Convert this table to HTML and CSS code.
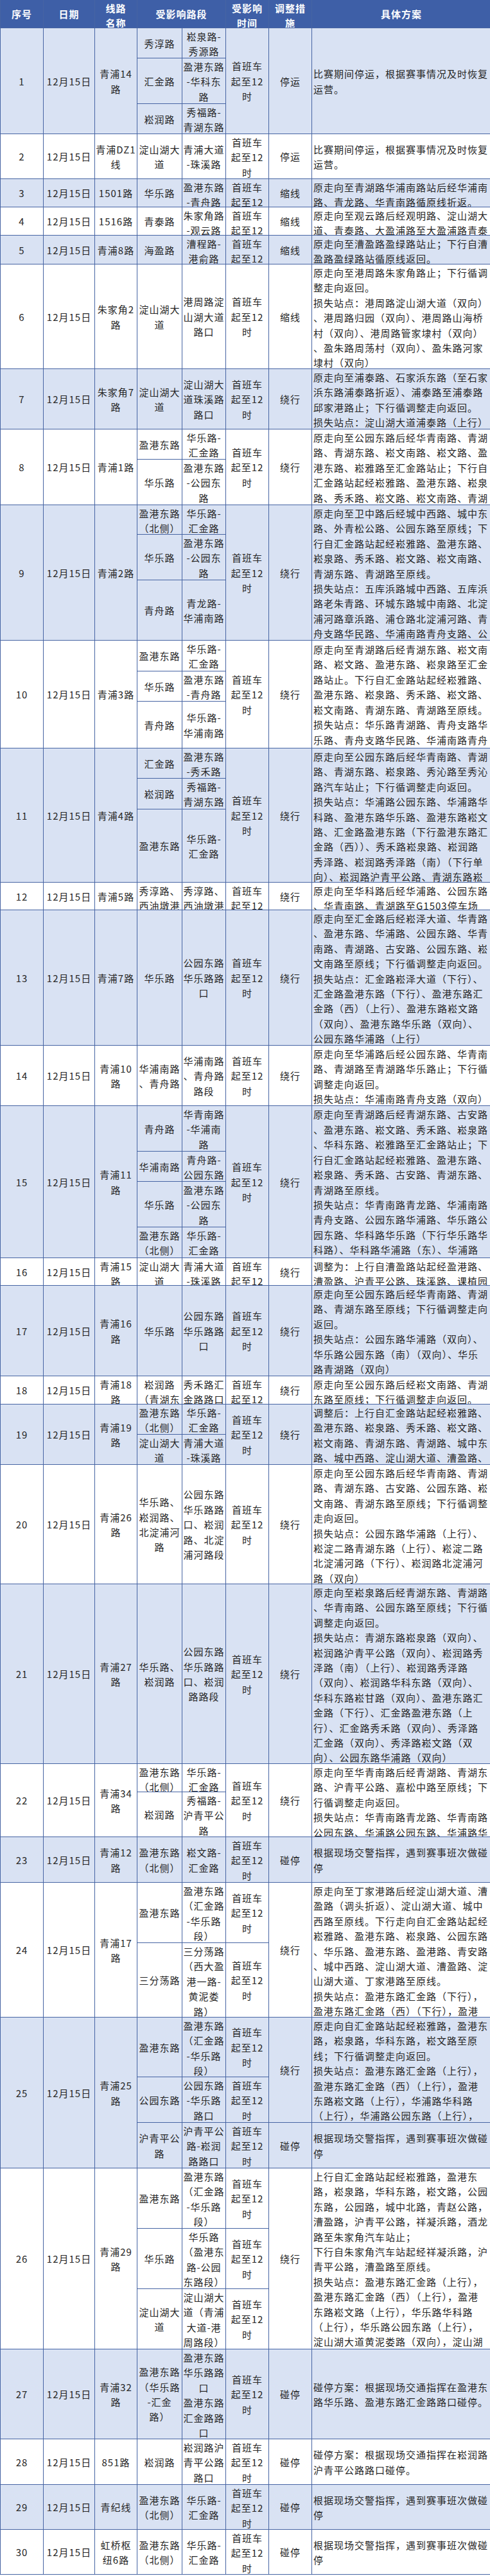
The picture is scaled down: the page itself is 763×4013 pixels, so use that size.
FILE: index.html
```html
<!DOCTYPE html>
<html lang="zh-CN">
<head>
<meta charset="utf-8">
<title>公交线路调整方案</title>
<link rel="stylesheet" href="styles.css">
</head>
<body>
<div class="sheet">

<div class="rec head">
<div class="cell k1"><span>序号</span></div>
<div class="cell k2"><span>日期</span></div>
<div class="cell k3"><span>线路<br>名称</span></div>
<div class="cell k45"><span>受影响路段</span></div>
<div class="cell k6"><span>受影响<br>时间</span></div>
<div class="cell k7"><span>调整措<br>施</span></div>
<div class="cell k8"><span>具体方案</span></div>
</div>

<div class="rec alt r1">
<div class="cell k1"><span>1</span></div>
<div class="cell k2"><span>12月15日</span></div>
<div class="cell k3"><span>青浦14<br>路</span></div>
<div class="cell k4 y1"><span>秀淳路</span></div>
<div class="cell k5 y1"><span>崧泉路-<br>秀源路</span></div>
<div class="cell k4 y2"><span>汇金路</span></div>
<div class="cell k5 y2"><span>盈港东路<br>-华科东<br>路</span></div>
<div class="cell k4 y3"><span>崧润路</span></div>
<div class="cell k5 y3"><span>秀福路-<br>青湖东路</span></div>
<div class="cell k6"><span>首班车<br>起至12<br>时</span></div>
<div class="cell k7"><span>停运</span></div>
<div class="cell k8"><span>比赛期间停运，根据赛事情况及时恢复<br>运营。</span></div>
</div>

<div class="rec r2">
<div class="cell k1"><span>2</span></div>
<div class="cell k2"><span>12月15日</span></div>
<div class="cell k3"><span>青浦DZ1<br>线</span></div>
<div class="cell k4"><span>淀山湖大<br>道</span></div>
<div class="cell k5"><span>青浦大道<br>-珠溪路</span></div>
<div class="cell k6"><span>首班车<br>起至12<br>时</span></div>
<div class="cell k7"><span>停运</span></div>
<div class="cell k8"><span>比赛期间停运，根据赛事情况及时恢复<br>运营。</span></div>
</div>

<div class="rec alt r3">
<div class="cell k1"><span>3</span></div>
<div class="cell k2"><span>12月15日</span></div>
<div class="cell k3"><span>1501路</span></div>
<div class="cell k4"><span>华乐路</span></div>
<div class="cell k5"><span>盈港东路<br>-青舟路</span></div>
<div class="cell k6"><span>首班车<br>起至12<br>时</span></div>
<div class="cell k7"><span>缩线</span></div>
<div class="cell k8"><span>原走向至青湖路华浦南路站后经华浦南<br>路、青龙路、华青南路循原线折返。</span></div>
</div>

<div class="rec r4">
<div class="cell k1"><span>4</span></div>
<div class="cell k2"><span>12月15日</span></div>
<div class="cell k3"><span>1516路</span></div>
<div class="cell k4"><span>青泰路</span></div>
<div class="cell k5"><span>朱家角路<br>-观云路</span></div>
<div class="cell k6"><span>首班车<br>起至12<br>时</span></div>
<div class="cell k7"><span>缩线</span></div>
<div class="cell k8"><span>原走向至观云路后经观明路、淀山湖大<br>道、青泰路、大盈浦路至大盈浦路青泰</span></div>
</div>

<div class="rec alt r5">
<div class="cell k1"><span>5</span></div>
<div class="cell k2"><span>12月15日</span></div>
<div class="cell k3"><span>青浦8路</span></div>
<div class="cell k4"><span>海盈路</span></div>
<div class="cell k5"><span>漕程路-<br>港俞路</span></div>
<div class="cell k6"><span>首班车<br>起至12<br>时</span></div>
<div class="cell k7"><span>缩线</span></div>
<div class="cell k8"><span>原走向至漕盈路盈绿路站止；下行自漕<br>盈路盈绿路站循原线返回。</span></div>
</div>

<div class="rec r6">
<div class="cell k1"><span>6</span></div>
<div class="cell k2"><span>12月15日</span></div>
<div class="cell k3"><span>朱家角2<br>路</span></div>
<div class="cell k4"><span>淀山湖大<br>道</span></div>
<div class="cell k5"><span>港周路淀<br>山湖大道<br>路口</span></div>
<div class="cell k6"><span>首班车<br>起至12<br>时</span></div>
<div class="cell k7"><span>缩线</span></div>
<div class="cell k8"><span>原走向至港周路朱家角路止；下行循调<br>整走向返回。<br>损失站点：港周路淀山湖大道（双向）<br>、港周路归园（双向）、港周路山海桥<br>村（双向）、港周路管家埭村（双向）<br>、盈朱路周荡村（双向）、盈朱路河家<br>埭村（双向）</span></div>
</div>

<div class="rec alt r7">
<div class="cell k1"><span>7</span></div>
<div class="cell k2"><span>12月15日</span></div>
<div class="cell k3"><span>朱家角7<br>路</span></div>
<div class="cell k4"><span>淀山湖大<br>道</span></div>
<div class="cell k5"><span>淀山湖大<br>道珠溪路<br>路口</span></div>
<div class="cell k6"><span>首班车<br>起至12<br>时</span></div>
<div class="cell k7"><span>绕行</span></div>
<div class="cell k8"><span>原走向至浦泰路、石家浜东路（至石家<br>浜东路浦泰路折返）、浦泰路至浦泰路<br>邱家港路止；下行循调整走向返回。<br>损失站点：淀山湖大道浦泰路（上行）</span></div>
</div>

<div class="rec r8">
<div class="cell k1"><span>8</span></div>
<div class="cell k2"><span>12月15日</span></div>
<div class="cell k3"><span>青浦1路</span></div>
<div class="cell k4 y1"><span>盈港东路</span></div>
<div class="cell k5 y1"><span>华乐路-<br>汇金路</span></div>
<div class="cell k4 y2"><span>华乐路</span></div>
<div class="cell k5 y2"><span>盈港东路<br>-公园东<br>路</span></div>
<div class="cell k6"><span>首班车<br>起至12<br>时</span></div>
<div class="cell k7"><span>绕行</span></div>
<div class="cell k8"><span>原走向至公园东路后经华青南路、青湖<br>路、青湖东路、崧文南路、崧文路、盈<br>港东路、崧雅路至汇金路站止；下行自<br>汇金路站起经崧雅路、盈港东路、崧泉<br>路、秀禾路、崧文路、崧文南路、青湖</span></div>
</div>

<div class="rec alt r9">
<div class="cell k1"><span>9</span></div>
<div class="cell k2"><span>12月15日</span></div>
<div class="cell k3"><span>青浦2路</span></div>
<div class="cell k4 y1"><span>盈港东路<br>（北侧）</span></div>
<div class="cell k5 y1"><span>华乐路-<br>汇金路</span></div>
<div class="cell k4 y2"><span>华乐路</span></div>
<div class="cell k5 y2"><span>盈港东路<br>-公园东<br>路</span></div>
<div class="cell k4 y3"><span>青舟路</span></div>
<div class="cell k5 y3"><span>青龙路-<br>华浦南路</span></div>
<div class="cell k6"><span>首班车<br>起至12<br>时</span></div>
<div class="cell k7"><span>绕行</span></div>
<div class="cell k8"><span>原走向至卫中路后经城中西路、城中东<br>路、外青松公路、公园东路至原线；下<br>行自汇金路站起经崧雅路、盈港东路、<br>崧泉路、秀禾路、崧文路、崧文南路、<br>青湖东路、青湖路至原线。<br>损失站点：五库浜路城中西路、五库浜<br>路老朱青路、环城东路城中南路、北淀<br>浦河路章浜路、浦仓路北淀浦河路、青<br>舟支路华民路、华浦南路青舟支路、公</span></div>
</div>

<div class="rec r10">
<div class="cell k1"><span>10</span></div>
<div class="cell k2"><span>12月15日</span></div>
<div class="cell k3"><span>青浦3路</span></div>
<div class="cell k4 y1"><span>盈港东路</span></div>
<div class="cell k5 y1"><span>华乐路-<br>汇金路</span></div>
<div class="cell k4 y2"><span>华乐路</span></div>
<div class="cell k5 y2"><span>盈港东路<br>-青舟路</span></div>
<div class="cell k4 y3"><span>青舟路</span></div>
<div class="cell k5 y3"><span>华乐路-<br>华浦南路</span></div>
<div class="cell k6"><span>首班车<br>起至12<br>时</span></div>
<div class="cell k7"><span>绕行</span></div>
<div class="cell k8"><span>原走向至青湖路后经青湖东路、崧文南<br>路、崧文路、盈港东路、崧泉路至汇金<br>路站止。下行自汇金路站起经崧雅路、<br>盈港东路、崧泉路、秀禾路、崧文路、<br>崧文南路、青湖东路、青湖路至原线。<br>损失站点：华乐路青湖路、青舟支路华<br>乐路、青舟支路华民路、华浦南路青舟</span></div>
</div>

<div class="rec alt r11">
<div class="cell k1"><span>11</span></div>
<div class="cell k2"><span>12月15日</span></div>
<div class="cell k3"><span>青浦4路</span></div>
<div class="cell k4 y1"><span>汇金路</span></div>
<div class="cell k5 y1"><span>盈港东路<br>-秀禾路</span></div>
<div class="cell k4 y2"><span>崧润路</span></div>
<div class="cell k5 y2"><span>秀福路-<br>青湖东路</span></div>
<div class="cell k4 y3"><span>盈港东路</span></div>
<div class="cell k5 y3"><span>华乐路-<br>汇金路</span></div>
<div class="cell k6"><span>首班车<br>起至12<br>时</span></div>
<div class="cell k7"><span>绕行</span></div>
<div class="cell k8"><span>原走向至公园东路后经华青南路、青湖<br>路、青湖东路、崧泉路、秀沁路至秀沁<br>路汽车站止；下行循调整走向返回。<br>损失站点：华浦路公园东路、华浦路华<br>科路、盈港东路华乐路、盈港东路崧文<br>路、汇金路盈港东路（下行盈港东路汇<br>金路（西））、秀禾路崧泉路、崧润路<br>秀泽路、崧润路秀泽路（南）（下行单<br>向）、崧润路沪青平公路、青湖东路崧</span></div>
</div>

<div class="rec r12">
<div class="cell k1"><span>12</span></div>
<div class="cell k2"><span>12月15日</span></div>
<div class="cell k3"><span>青浦5路</span></div>
<div class="cell k4"><span>秀淳路、<br>西油墩港</span></div>
<div class="cell k5"><span>秀淳路、<br>西油墩港</span></div>
<div class="cell k6"><span>首班车<br>起至12<br>时</span></div>
<div class="cell k7"><span>绕行</span></div>
<div class="cell k8"><span>原走向至华科路后经华浦路、公园东路<br>、华青南路、青湖路至G1503停车场</span></div>
</div>

<div class="rec alt r13">
<div class="cell k1"><span>13</span></div>
<div class="cell k2"><span>12月15日</span></div>
<div class="cell k3"><span>青浦7路</span></div>
<div class="cell k4"><span>华乐路</span></div>
<div class="cell k5"><span>公园东路<br>华乐路路<br>口</span></div>
<div class="cell k6"><span>首班车<br>起至12<br>时</span></div>
<div class="cell k7"><span>绕行</span></div>
<div class="cell k8"><span>原走向至汇金路后经崧泽大道、华青路<br>、盈港东路、华浦路、公园东路、华青<br>南路、青湖路、古安路、公园东路、崧<br>文南路至原线；下行循调整走向返回。<br>损失站点：汇金路崧泽大道（下行）、<br>汇金路盈港东路（下行）、盈港东路汇<br>金路（西）（上行）、盈港东路崧文路<br>（双向）、盈港东路华乐路（双向）、<br>公园东路华浦路（上行）</span></div>
</div>

<div class="rec r14">
<div class="cell k1"><span>14</span></div>
<div class="cell k2"><span>12月15日</span></div>
<div class="cell k3"><span>青浦10<br>路</span></div>
<div class="cell k4"><span>华浦南路<br>、青舟路</span></div>
<div class="cell k5"><span>华浦南路<br>、青舟路<br>路段</span></div>
<div class="cell k6"><span>首班车<br>起至12<br>时</span></div>
<div class="cell k7"><span>绕行</span></div>
<div class="cell k8"><span>原走向至华浦路后经公园东路、华青南<br>路、青湖路至青湖路华乐路止；下行循<br>调整走向返回。<br>损失站点：华浦南路青舟支路（双向）</span></div>
</div>

<div class="rec alt r15">
<div class="cell k1"><span>15</span></div>
<div class="cell k2"><span>12月15日</span></div>
<div class="cell k3"><span>青浦11<br>路</span></div>
<div class="cell k4 y1"><span>青舟路</span></div>
<div class="cell k5 y1"><span>华青南路<br>-华浦南<br>路</span></div>
<div class="cell k4 y2"><span>华浦南路</span></div>
<div class="cell k5 y2"><span>青舟路-<br>公园东路</span></div>
<div class="cell k4 y3"><span>华乐路</span></div>
<div class="cell k5 y3"><span>盈港东路<br>-公园东<br>路</span></div>
<div class="cell k4 y4"><span>盈港东路<br>（北侧）</span></div>
<div class="cell k5 y4"><span>华乐路-<br>汇金路</span></div>
<div class="cell k6"><span>首班车<br>起至12<br>时</span></div>
<div class="cell k7"><span>绕行</span></div>
<div class="cell k8"><span>原走向至青湖路后经青湖东路、古安路<br>、盈港东路、崧文路、秀禾路、崧泉路<br>、华科东路、崧雅路至汇金路站止；下<br>行自汇金路站起经崧雅路、盈港东路、<br>崧泉路、秀禾路、古安路、青湖东路、<br>青湖路至原线。<br>损失站点：华青南路青龙路、华浦南路<br>青舟支路、公园东路华浦路、华乐路公<br>园东路、华科路华乐路（下行华乐路华<br>科路）、华科路华浦路（东）、华浦路</span></div>
</div>

<div class="rec r16">
<div class="cell k1"><span>16</span></div>
<div class="cell k2"><span>12月15日</span></div>
<div class="cell k3"><span>青浦15<br>路</span></div>
<div class="cell k4"><span>淀山湖大<br>道</span></div>
<div class="cell k5"><span>青浦大道<br>-珠溪路</span></div>
<div class="cell k6"><span>首班车<br>起至12<br>时</span></div>
<div class="cell k7"><span>绕行</span></div>
<div class="cell k8"><span>调整为：上行自漕盈路站起经盈港路、<br>漕盈路、沪青平公路、珠溪路、课植园</span></div>
</div>

<div class="rec alt r17">
<div class="cell k1"><span>17</span></div>
<div class="cell k2"><span>12月15日</span></div>
<div class="cell k3"><span>青浦16<br>路</span></div>
<div class="cell k4"><span>华乐路</span></div>
<div class="cell k5"><span>公园东路<br>华乐路路<br>口</span></div>
<div class="cell k6"><span>首班车<br>起至12<br>时</span></div>
<div class="cell k7"><span>绕行</span></div>
<div class="cell k8"><span>原走向至公园东路后经华青南路、青湖<br>路、青湖东路至原线；下行循调整走向<br>返回。<br>损失站点：公园东路华浦路（双向）、<br>华乐路公园东路（南）（双向）、华乐<br>路青湖路（双向）</span></div>
</div>

<div class="rec r18">
<div class="cell k1"><span>18</span></div>
<div class="cell k2"><span>12月15日</span></div>
<div class="cell k3"><span>青浦18<br>路</span></div>
<div class="cell k4"><span>崧润路<br>（青湖东</span></div>
<div class="cell k5"><span>秀禾路汇<br>金路路口</span></div>
<div class="cell k6"><span>首班车<br>起至12<br>时</span></div>
<div class="cell k7"><span>绕行</span></div>
<div class="cell k8"><span>原走向至公园东路后经崧文南路、青湖<br>东路至原线；下行循调整走向返回。</span></div>
</div>

<div class="rec alt r19">
<div class="cell k1"><span>19</span></div>
<div class="cell k2"><span>12月15日</span></div>
<div class="cell k3"><span>青浦19<br>路</span></div>
<div class="cell k4 y1"><span>盈港东路<br>（北侧）</span></div>
<div class="cell k5 y1"><span>华乐路-<br>汇金路</span></div>
<div class="cell k4 y2"><span>淀山湖大<br>道</span></div>
<div class="cell k5 y2"><span>青浦大道<br>-珠溪路</span></div>
<div class="cell k6"><span>首班车<br>起至12<br>时</span></div>
<div class="cell k7"><span>绕行</span></div>
<div class="cell k8"><span>调整后：上行自汇金路站起经崧雅路、<br>盈港东路、崧泉路、秀禾路、崧文路、<br>崧文南路、青湖东路、青湖路、城中东<br>路、城中西路、淀山湖大道、漕盈路、</span></div>
</div>

<div class="rec r20">
<div class="cell k1"><span>20</span></div>
<div class="cell k2"><span>12月15日</span></div>
<div class="cell k3"><span>青浦26<br>路</span></div>
<div class="cell k4"><span>华乐路、<br>崧润路、<br>北淀浦河<br>路</span></div>
<div class="cell k5"><span>公园东路<br>华乐路路<br>口、崧润<br>路、北淀<br>浦河路段</span></div>
<div class="cell k6"><span>首班车<br>起至12<br>时</span></div>
<div class="cell k7"><span>绕行</span></div>
<div class="cell k8"><span>原走向至公园东路后经华青南路、青湖<br>路、青湖东路、古安路、公园东路、崧<br>文南路、青湖东路至原线；下行循调整<br>走向返回。<br>损失站点：公园东路华浦路（上行）、<br>崧淀二路青湖东路（上行）、崧淀二路<br>北淀浦河路（下行）、崧润路北淀浦河<br>路（双向）</span></div>
</div>

<div class="rec alt r21">
<div class="cell k1"><span>21</span></div>
<div class="cell k2"><span>12月15日</span></div>
<div class="cell k3"><span>青浦27<br>路</span></div>
<div class="cell k4"><span>华乐路、<br>崧润路</span></div>
<div class="cell k5"><span>公园东路<br>华乐路路<br>口、崧润<br>路路段</span></div>
<div class="cell k6"><span>首班车<br>起至12<br>时</span></div>
<div class="cell k7"><span>绕行</span></div>
<div class="cell k8"><span>原走向至崧泉路后经青湖东路、青湖路<br>、华青南路、公园东路至原线；下行循<br>调整走向返回。<br>损失站点：青湖东路崧泉路（双向）、<br>崧润路沪青平公路（双向）、崧润路秀<br>泽路（南）（上行）、崧润路秀泽路<br>（双向）、崧润路华科东路（双向）、<br>华科东路崧甘路（双向）、盈港东路汇<br>金路（下行）、汇金路盈港东路（上<br>行）、汇金路秀禾路（双向）、秀泽路<br>汇金路（双向）、秀泽路崧文路（双<br>向）、公园东路华浦路（双向）</span></div>
</div>

<div class="rec r22">
<div class="cell k1"><span>22</span></div>
<div class="cell k2"><span>12月15日</span></div>
<div class="cell k3"><span>青浦34<br>路</span></div>
<div class="cell k4 y1"><span>盈港东路<br>（北侧）</span></div>
<div class="cell k5 y1"><span>华乐路-<br>汇金路</span></div>
<div class="cell k4 y2"><span>崧润路</span></div>
<div class="cell k5 y2"><span>秀福路-<br>沪青平公<br>路</span></div>
<div class="cell k6"><span>首班车<br>起至12<br>时</span></div>
<div class="cell k7"><span>绕行</span></div>
<div class="cell k8"><span>原走向至华青南路后经青湖路、青湖东<br>路、沪青平公路、嘉松中路至原线；下<br>行循调整走向返回。<br>损失站点：华青南路青龙路、华青南路<br>公园东路、华浦路公园东路、华浦路华</span></div>
</div>

<div class="rec alt r23">
<div class="cell k1"><span>23</span></div>
<div class="cell k2"><span>12月15日</span></div>
<div class="cell k3"><span>青浦12<br>路</span></div>
<div class="cell k4"><span>盈港东路<br>（北侧）</span></div>
<div class="cell k5"><span>崧文路-<br>汇金路</span></div>
<div class="cell k6"><span>首班车<br>起至12<br>时</span></div>
<div class="cell k7"><span>碰停</span></div>
<div class="cell k8"><span>根据现场交警指挥，遇到赛事班次做碰<br>停</span></div>
</div>

<div class="rec r24">
<div class="cell k1"><span>24</span></div>
<div class="cell k2"><span>12月15日</span></div>
<div class="cell k3"><span>青浦17<br>路</span></div>
<div class="cell k4 y1"><span>盈港东路</span></div>
<div class="cell k5 y1"><span>盈港东路<br>（汇金路<br>-华乐路<br>段）</span></div>
<div class="cell k6 y1"><span>首班车<br>起至12<br>时</span></div>
<div class="cell k4 y2"><span>三分荡路</span></div>
<div class="cell k5 y2"><span>三分荡路<br>（西大盈<br>港一路-<br>黄泥娄<br>路）</span></div>
<div class="cell k6 y2"><span>首班车<br>起至12<br>时</span></div>
<div class="cell k7"><span>绕行</span></div>
<div class="cell k8"><span>原走向至丁家港路后经淀山湖大道、漕<br>盈路（调头折返）、淀山湖大道、城中<br>西路至原线。下行走向自汇金路站起经<br>崧雅路、盈港东路、崧泉路、公园东路<br>、华乐路、盈港东路、盈港路、青安路<br>、城中西路、淀山湖大道、漕盈路、淀<br>山湖大道、丁家港路至原线。<br>损失站点：盈港东路汇金路（下行），<br>盈港东路汇金路（西）（下行），盈港</span></div>
</div>

<div class="rec alt r25">
<div class="cell k1"><span>25</span></div>
<div class="cell k2"><span>12月15日</span></div>
<div class="cell k3"><span>青浦25<br>路</span></div>
<div class="cell k4 y1"><span>盈港东路</span></div>
<div class="cell k5 y1"><span>盈港东路<br>（汇金路<br>-华乐路<br>段）</span></div>
<div class="cell k6 y1"><span>首班车<br>起至12<br>时</span></div>
<div class="cell k4 y2"><span>公园东路</span></div>
<div class="cell k5 y2"><span>公园东路<br>-华乐路<br>路口</span></div>
<div class="cell k6 y2"><span>首班车<br>起至12<br>时</span></div>
<div class="cell k4 y3"><span>沪青平公<br>路</span></div>
<div class="cell k5 y3"><span>沪青平公<br>路-崧润<br>路路口</span></div>
<div class="cell k6 y3"><span>首班车<br>起至12<br>时</span></div>
<div class="cell k7 y12"><span>绕行</span></div>
<div class="cell k7 y3"><span>碰停</span></div>
<div class="cell k8 y12"><span>原走向自汇金路站起经崧雅路，盈港东<br>路，崧泉路，华科东路，崧文路至原<br>线；下行循调整走向返回。<br>损失站点：盈港东路汇金路（上行），<br>盈港东路汇金路（西）（上行），盈港<br>东路崧文路（上行），华浦路华科路<br>（上行），华浦路公园东路（上行），</span></div>
<div class="cell k8 y3"><span>根据现场交警指挥，遇到赛事班次做碰<br>停</span></div>
</div>

<div class="rec r26">
<div class="cell k1"><span>26</span></div>
<div class="cell k2"><span>12月15日</span></div>
<div class="cell k3"><span>青浦29<br>路</span></div>
<div class="cell k4 y1"><span>盈港东路</span></div>
<div class="cell k5 y1"><span>盈港东路<br>（汇金路<br>-华乐路<br>段）</span></div>
<div class="cell k6 y1"><span>首班车<br>起至12<br>时</span></div>
<div class="cell k4 y2"><span>华乐路</span></div>
<div class="cell k5 y2"><span>华乐路<br>（盈港东<br>路-公园<br>东路段）</span></div>
<div class="cell k6 y2"><span>首班车<br>起至12<br>时</span></div>
<div class="cell k4 y3"><span>淀山湖大<br>道</span></div>
<div class="cell k5 y3"><span>淀山湖大<br>道（青浦<br>大道-港<br>周路段）</span></div>
<div class="cell k6 y3"><span>首班车<br>起至12<br>时</span></div>
<div class="cell k7"><span>绕行</span></div>
<div class="cell k8"><span>上行自汇金路站起经崧雅路，盈港东<br>路，崧泉路，华科东路，崧文路，公园<br>东路，公园路，城中北路，青赵公路，<br>漕盈路，沪青平公路，祥凝浜路，酒龙<br>路至朱家角汽车站止；<br>下行自朱家角汽车站起经祥凝浜路，沪<br>青平公路，漕盈路至原线。<br>损失站点：盈港东路汇金路（上行），<br>盈港东路汇金路（西）（上行），盈港<br>东路崧文路（上行），华乐路华科路<br>（上行），华乐路公园东路（上行），<br>淀山湖大道黄泥娄路（双向），淀山湖</span></div>
</div>

<div class="rec alt r27">
<div class="cell k1"><span>27</span></div>
<div class="cell k2"><span>12月15日</span></div>
<div class="cell k3"><span>青浦32<br>路</span></div>
<div class="cell k4"><span>盈港东路<br>（华乐路<br>-汇金<br>路）</span></div>
<div class="cell k5"><span>盈港东路<br>华乐路路<br>口<br>盈港东路<br>汇金路路<br>口</span></div>
<div class="cell k6"><span>首班车<br>起至12<br>时</span></div>
<div class="cell k7"><span>碰停</span></div>
<div class="cell k8"><span>碰停方案：根据现场交通指挥在盈港东<br>路华乐路、盈港东路汇金路路口碰停。</span></div>
</div>

<div class="rec r28">
<div class="cell k1"><span>28</span></div>
<div class="cell k2"><span>12月15日</span></div>
<div class="cell k3"><span>851路</span></div>
<div class="cell k4"><span>崧润路</span></div>
<div class="cell k5"><span>崧润路沪<br>青平公路<br>路口</span></div>
<div class="cell k6"><span>首班车<br>起至12<br>时</span></div>
<div class="cell k7"><span>碰停</span></div>
<div class="cell k8"><span>碰停方案：根据现场交通指挥在崧润路<br>沪青平公路路口碰停。</span></div>
</div>

<div class="rec alt r29">
<div class="cell k1"><span>29</span></div>
<div class="cell k2"><span>12月15日</span></div>
<div class="cell k3"><span>青纪线</span></div>
<div class="cell k4"><span>盈港东路<br>（北侧）</span></div>
<div class="cell k5"><span>华乐路-<br>汇金路</span></div>
<div class="cell k6"><span>首班车<br>起至12<br>时</span></div>
<div class="cell k7"><span>碰停</span></div>
<div class="cell k8"><span>根据现场交警指挥，遇到赛事班次做碰<br>停</span></div>
</div>

<div class="rec r30">
<div class="cell k1"><span>30</span></div>
<div class="cell k2"><span>12月15日</span></div>
<div class="cell k3"><span>虹桥枢<br>纽6路</span></div>
<div class="cell k4"><span>盈港东路<br>（北侧）</span></div>
<div class="cell k5"><span>华乐路-<br>汇金路</span></div>
<div class="cell k6"><span>首班车<br>起至12<br>时</span></div>
<div class="cell k7"><span>碰停</span></div>
<div class="cell k8"><span>根据现场交警指挥，遇到赛事班次做碰<br>停</span></div>
</div>

</div>
</body>
</html>
```

FILE: styles.css
```css
html, body {
  margin: 0;
  padding: 0;
  background: #ffffff;
}

body {
  font-family: "Noto Sans CJK SC", "Noto Sans", "Liberation Sans", sans-serif;
  font-size: 15px;
  letter-spacing: 1px;
  line-height: 23.4px;
  color: #262626;
}

.sheet {
  width: 763px;
  box-sizing: border-box;
  display: flex;
  flex-direction: column;
  gap: 1px;
  padding: 0 0 1px 1px;
  background: #4664a3;
}

.rec {
  display: grid;
  grid-template-columns: 66px 79px 65px 69px 67px 66px 66px 1fr;
  gap: 1px;
}

.cell {
  grid-row: 1 / -1;
  display: flex;
  overflow: hidden;
  min-height: 0;
  padding: 1px 1px 0;
  background: #ffffff;
  text-align: center;
  white-space: nowrap;
}

.cell > span {
  margin: auto;
}

.alt .cell {
  background: #d9e2f3;
}

.head .cell {
  background: #3e5fa7;
  color: #ffffff;
  font-weight: 700;
}

/* columns */
.k1 { grid-column: 1; }
.k2 { grid-column: 2; }
.k3 { grid-column: 3; }
.k4 { grid-column: 4; }
.k5 { grid-column: 5; }
.k45 { grid-column: 4 / 6; }
.k6 { grid-column: 6; }
.k7 { grid-column: 7; }
.k8 {
  grid-column: 8;
  padding-left: 2px;
  text-align: left;
}

.k8 > span {
  margin: auto 0;
}

.head .k8 > span {
  margin: auto;
}

/* sub-rows inside a record */
.y1 { grid-row: 1; }
.y2 { grid-row: 2; }
.y3 { grid-row: 3; }
.y4 { grid-row: 4; }
.y12 { grid-row: 1 / 3; }

/* record heights */
.head { grid-template-rows: 43px; }
.r1 { grid-template-rows: 46px 70px 46px; }
.r2 { grid-template-rows: 69px; }
.r3 { grid-template-rows: 43px; }
.r4 { grid-template-rows: 43px; }
.r5 { grid-template-rows: 44px; }
.r6 { grid-template-rows: 162px; }
.r7 { grid-template-rows: 93px; }
.r8 { grid-template-rows: 46px 70px; }
.r9 { grid-template-rows: 45px 70px 93px; }
.r10 { grid-template-rows: 47px 46px 72px; }
.r11 { grid-template-rows: 46px 47px 113px; }
.r12 { grid-template-rows: 42px; }
.r13 { grid-template-rows: 210px; }
.r14 { grid-template-rows: 93px; }
.r15 { grid-template-rows: 70px 46px 70px 47px; }
.r16 { grid-template-rows: 42px; }
.r17 { grid-template-rows: 140px; }
.r18 { grid-template-rows: 43px; }
.r19 { grid-template-rows: 46px 46px; }
.r20 { grid-template-rows: 185px; }
.r21 { grid-template-rows: 279px; }
.r22 { grid-template-rows: 43px 69px; }
.r23 { grid-template-rows: 70px; }
.r24 { grid-template-rows: 93px 115px; }
.r25 { grid-template-rows: 92px 70px 70px; }
.r26 { grid-template-rows: 93px 93px 93px; }
.r27 { grid-template-rows: 139px; }
.r28 { grid-template-rows: 70px; }
.r29 { grid-template-rows: 69px; }
.r30 { grid-template-rows: 69px; }
```
